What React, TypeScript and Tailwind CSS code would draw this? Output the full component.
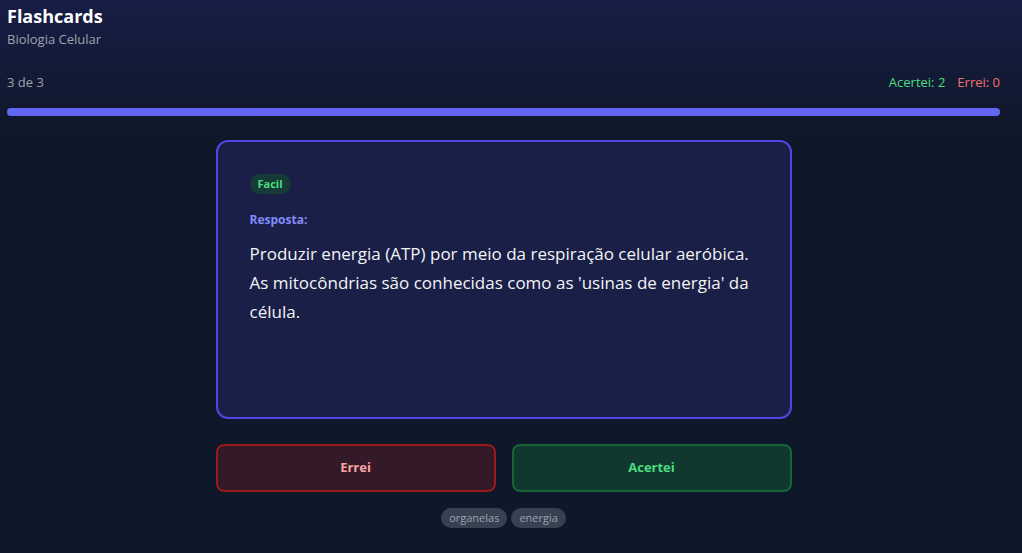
import React from "react";

export default function App() {
  return (
    <div
      className="min-h-[553px] w-full bg-[#0f172a] bg-linear-to-b from-[#181d45] to-[#0f172a] to-[24%] text-white"
      style={{ fontFamily: '"Open Sans", "Noto Sans", sans-serif' }}
    >
      <div className="w-[1007px]">
        <div className="px-[7px] pt-[4px] pb-[24px]">
          <h1 className="text-[18px] font-bold leading-[24px] text-white">Flashcards</h1>
          <p className="mt-[2px] text-[13px] leading-[18px] text-[#9ca3af]">Biologia Celular</p>
          <div className="mt-[25px] flex items-center justify-between text-[13px] leading-[18px]">
            <span className="text-[#9ca3af]">3 de 3</span>
            <div className="flex gap-3">
              <span className="text-[#4ade80]">Acertei: 2</span>
              <span className="text-[#f87171]">Errei: 0</span>
            </div>
          </div>
          <div className="mt-[17px] h-[8px] w-full rounded-full bg-[#1f2937]">
            <div className="h-full w-full rounded-full bg-[#6366f1]" />
          </div>
        </div>
        <div className="mx-auto w-[576px]">
          <div className="h-[279px] rounded-xl border-2 border-[#4f46e5] bg-[#1a1f47] p-8">
            <div className="flex">
              <span className="flex h-[20px] items-center rounded-full bg-[#163b36] px-2 text-[11px] font-bold text-[#4ade80]">
                Facil
              </span>
            </div>
            <p className="mt-[17px] text-[12px] font-bold leading-[18px] text-[#818cf8]">Resposta:</p>
            <p className="mt-[10px] text-[17px] leading-[29px] text-[#f3f4f6]">
              Produzir energia (ATP) por meio da respiração celular aeróbica. As mitocôndrias são conhecidas como as 'usinas de energia' da célula.
            </p>
          </div>
          <div className="mt-[25px] grid grid-cols-2 gap-4">
            <button className="h-[48px] rounded-lg border-2 border-[#991b1b] bg-[#341a28] text-[13px] font-bold text-[#fca5a5]">
              Errei
            </button>
            <button className="h-[48px] rounded-lg border-2 border-[#166534] bg-[#11382f] text-[13px] font-bold text-[#4ade80]">
              Acertei
            </button>
          </div>
          <div className="mt-[16px] flex justify-center gap-1">
            <span className="flex h-[20px] items-center rounded-full bg-[#374151] px-2 text-[11px] text-[#9ca3af]">organelas</span>
            <span className="flex h-[20px] items-center rounded-full bg-[#374151] px-2 text-[11px] text-[#9ca3af]">energia</span>
          </div>
        </div>
      </div>
    </div>
  );
}
